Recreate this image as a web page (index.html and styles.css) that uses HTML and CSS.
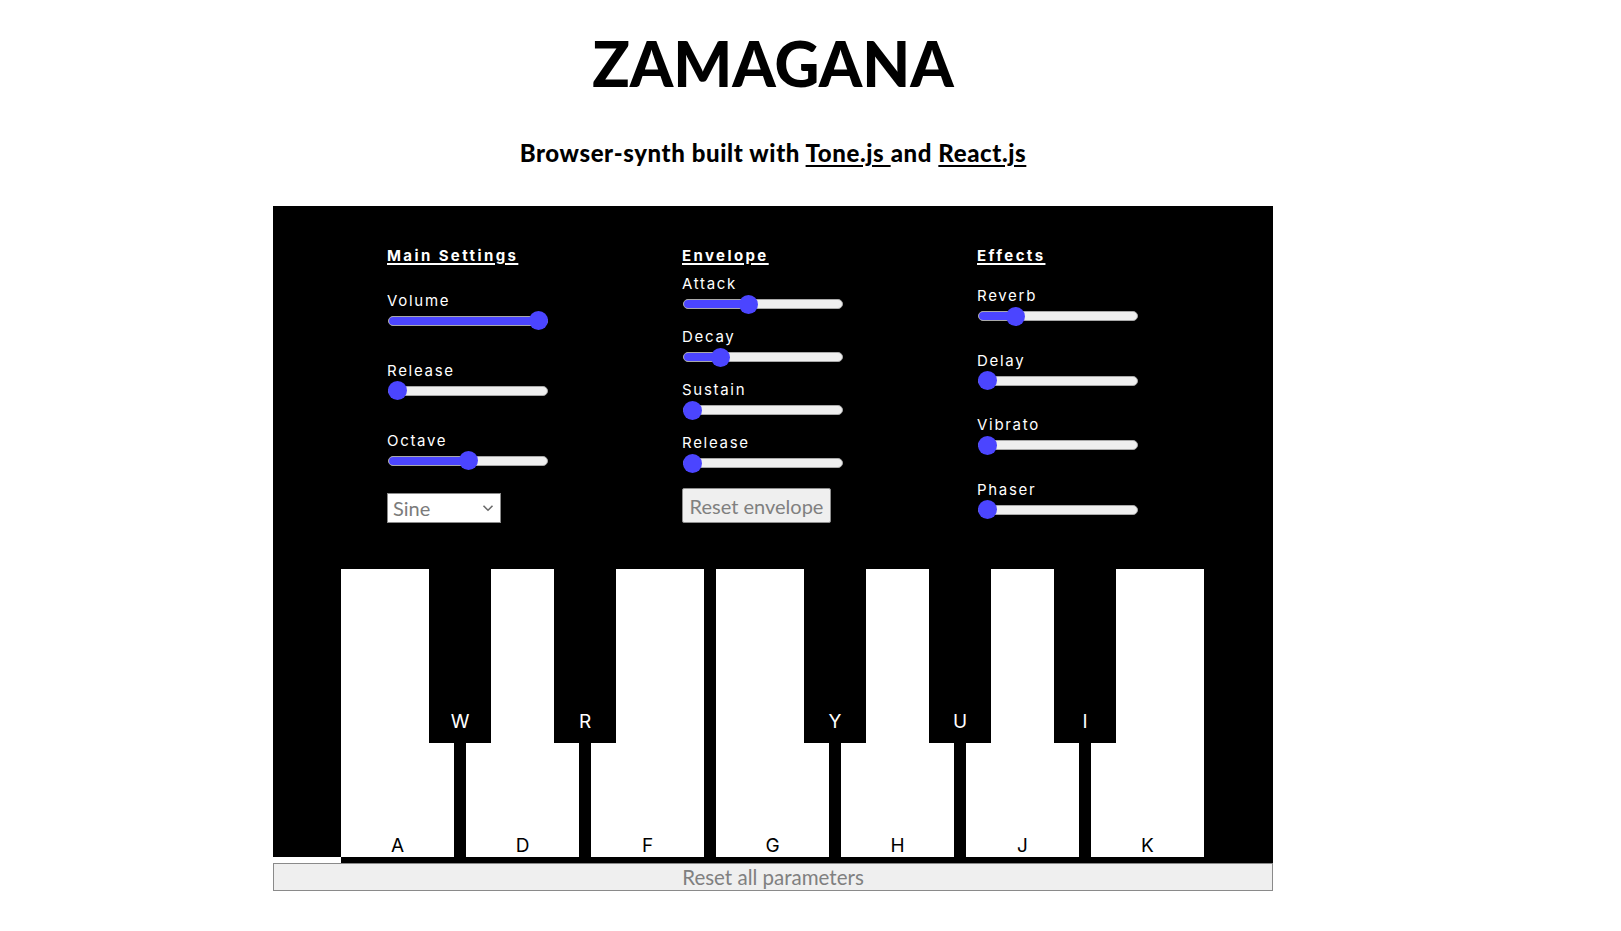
FILE: index.html
```html
<!DOCTYPE html>
<html lang="en">
<head>
<meta charset="utf-8">
<title>Zamagana</title>
<link rel="stylesheet" href="styles.css">
</head>
<body>
<div class="app">
  <h1 class="title">ZAMAGANA</h1>
  <h2 class="subtitle">Browser-synth built with <a href="#">Tone.js </a> and <a href="#">React.js</a></h2>

  <div class="panel">
    <div class="controls">
      <div class="col col-main">
        <h3 class="col-title">Main Settings</h3>
        <div class="groups">
          <div class="ctl">
            <div class="label">Volume</div>
            <div class="slider" style="--p:1"><div class="track"><div class="fill"></div></div><div class="thumb"></div></div>
          </div>
          <div class="ctl">
            <div class="label">Release</div>
            <div class="slider" style="--p:0"><div class="track"><div class="fill"></div></div><div class="thumb"></div></div>
          </div>
          <div class="ctl">
            <div class="label">Octave</div>
            <div class="slider" style="--p:0.5"><div class="track"><div class="fill"></div></div><div class="thumb"></div></div>
          </div>
        </div>
        <div class="select">
          <span>Sine</span>
          <svg class="chev" width="12" height="8" viewBox="0 0 12 8"><path d="M1.5 1.8 L6 6.2 L10.5 1.8" fill="none" stroke="#6a6a6a" stroke-width="1.6"/></svg>
        </div>
      </div>

      <div class="col col-env">
        <h3 class="col-title">Envelope</h3>
        <div class="groups">
          <div class="ctl">
            <div class="label">Attack</div>
            <div class="slider" style="--p:0.4"><div class="track"><div class="fill"></div></div><div class="thumb"></div></div>
          </div>
          <div class="ctl">
            <div class="label">Decay</div>
            <div class="slider" style="--p:0.2"><div class="track"><div class="fill"></div></div><div class="thumb"></div></div>
          </div>
          <div class="ctl">
            <div class="label">Sustain</div>
            <div class="slider" style="--p:0"><div class="track"><div class="fill"></div></div><div class="thumb"></div></div>
          </div>
          <div class="ctl">
            <div class="label">Release</div>
            <div class="slider" style="--p:0"><div class="track"><div class="fill"></div></div><div class="thumb"></div></div>
          </div>
        </div>
        <button class="btn-env">Reset envelope</button>
      </div>

      <div class="col col-fx">
        <h3 class="col-title">Effects</h3>
        <div class="groups">
          <div class="ctl">
            <div class="label">Reverb</div>
            <div class="slider" style="--p:0.2"><div class="track"><div class="fill"></div></div><div class="thumb"></div></div>
          </div>
          <div class="ctl">
            <div class="label">Delay</div>
            <div class="slider" style="--p:0"><div class="track"><div class="fill"></div></div><div class="thumb"></div></div>
          </div>
          <div class="ctl">
            <div class="label">Vibrato</div>
            <div class="slider" style="--p:0"><div class="track"><div class="fill"></div></div><div class="thumb"></div></div>
          </div>
          <div class="ctl">
            <div class="label">Phaser</div>
            <div class="slider" style="--p:0"><div class="track"><div class="fill"></div></div><div class="thumb"></div></div>
          </div>
        </div>
      </div>
    </div>

    <div class="keyboard">
      <div class="white"><span>A</span><div class="black"><span>W</span></div></div>
      <div class="white"><span>D</span><div class="black"><span>R</span></div></div>
      <div class="white"><span>F</span></div>
      <div class="white"><span>G</span><div class="black"><span>Y</span></div></div>
      <div class="white"><span>H</span><div class="black"><span>U</span></div></div>
      <div class="white"><span>J</span><div class="black"><span>I</span></div></div>
      <div class="white"><span>K</span></div>
    </div>
  </div>
  <button class="btn-all">Reset all parameters</button>
</div>
</body>
</html>
```

FILE: styles.css
```css
* { box-sizing: border-box; }
html, body { margin: 0; padding: 0; background: #fff; }
body { font-family: "Lato", "Liberation Sans", sans-serif; color: #000; }

.app {
  width: 1000px;
  margin-left: 273px;
  display: flex;
  flex-direction: column;
}

.title {
  margin: 0;
  padding-top: 28px;
  text-align: center;
  font-family: "Lato", sans-serif;
  font-weight: 900;
  font-size: 62px;
  line-height: 70px;
}

.subtitle {
  margin: 0;
  padding-top: 41px;
  text-align: center;
  font-family: "Lato", sans-serif;
  font-weight: 900;
  font-size: 24px;
  line-height: 28px;
  letter-spacing: 0.6px;
}
.subtitle a { color: #000; text-decoration: underline; text-decoration-thickness: 2px; text-underline-offset: 3px; }

.panel {
  margin-top: 39px;
  background: #000;
  padding-top: 40px;
  display: flex;
  flex-direction: column;
}

.controls {
  display: grid;
  grid-template-columns: 295px 295px 296px;
  padding-left: 114px;
  align-items: start;
}

.col { display: flex; flex-direction: column; align-items: flex-start; }

.col-title {
  margin: 0;
  color: #fff;
  font-family: "Inter", sans-serif;
  font-weight: 700;
  font-size: 15px;
  line-height: 20px;
  letter-spacing: 2.4px;
  text-decoration: underline;
  text-decoration-thickness: 1.5px;
  text-underline-offset: 2px;
}

.groups { display: flex; flex-direction: column; }
.col-main .groups { margin-top: 24.5px; gap: 30px; }
.col-env .groups { margin-top: 8px; gap: 13px; }
.col-fx .groups { margin-top: 20px; gap: 24.5px; }

.ctl { display: flex; flex-direction: column; }
.label {
  color: #fff;
  font-family: "Inter", sans-serif;
  font-size: 15px;
  line-height: 20px;
  letter-spacing: 1.7px;
}

.slider {
  --range: 141px;
  position: relative;
  width: 160px;
  height: 20px;
  display: flex;
  align-items: center;
  margin-left: 1px;
}
.track {
  width: 160px;
  height: 10px;
  border-radius: 5px;
  background: #efefef;
  border: 1px solid #a9a9a9;
  overflow: hidden;
}
.fill {
  height: 100%;
  width: calc(var(--p) * var(--range) + 9.5px);
  background: #4b45ff;
}
.thumb {
  position: absolute;
  top: 0.5px;
  left: calc(var(--p) * var(--range));
  width: 19px;
  height: 19px;
  border-radius: 50%;
  background: #4b45ff;
}

.select {
  margin-top: 22px;
  width: 114px;
  height: 30px;
  background: #fff;
  border: 1px solid #8a8a8a;
  display: flex;
  align-items: center;
  justify-content: space-between;
  padding: 0 6px 0 5px;
  color: #7b7b7b;
  font-family: "Lato", sans-serif;
  font-size: 20px;
}

.btn-env {
  margin-top: 15px;
  width: 149px;
  height: 35px;
  background: #efefef;
  border: 1px solid #8f8f8f;
  border-radius: 2px;
  color: #808080;
  font-family: "Lato", sans-serif;
  font-size: 20px;
  padding: 0;
}

.keyboard {
  margin-top: 45.5px;
  margin-left: 68px;
  display: flex;
  gap: 12px;
  background: #000;
  padding-bottom: 6px;
  margin-bottom: -6px;
}

.white {
  position: relative;
  flex: none;
  width: 113px;
  height: 288px;
  background: #fff;
  display: flex;
  align-items: flex-end;
  justify-content: center;
  padding-bottom: 2px;
  color: #000;
  font-family: "Inter", sans-serif;
  font-size: 19px;
  line-height: 19px;
}

.black {
  position: absolute;
  z-index: 1;
  top: 0;
  left: 100%;
  margin-left: 6px;
  transform: translateX(-50%);
  width: 62px;
  height: 174px;
  background: #000;
  color: #fff;
  display: flex;
  align-items: flex-end;
  justify-content: center;
  padding-bottom: 12px;
}

.btn-all {
  margin-top: 6px;
  width: 1000px;
  height: 28px;
  background: #efefef;
  border: 1px solid #8a8a8a;
  border-radius: 0;
  color: #808080;
  font-family: "Lato", sans-serif;
  font-size: 20.5px;
  padding: 0;
  line-height: 24px;
}
```
